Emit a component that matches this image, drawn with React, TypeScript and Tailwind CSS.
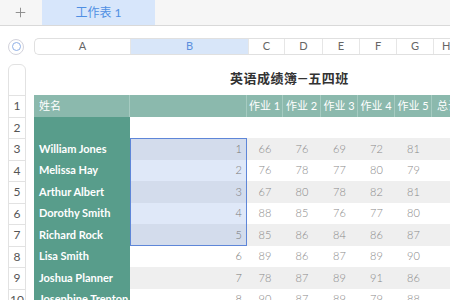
import { Plus } from 'lucide-react';

// 成绩数据
interface Row {
  name: string;
  idx: number;
  scores: number[];
}

const rows: Row[] = [
  { name: 'William Jones', idx: 1, scores: [66, 76, 69, 72, 81] },
  { name: 'Melissa Hay', idx: 2, scores: [76, 78, 77, 80, 79] },
  { name: 'Arthur Albert', idx: 3, scores: [67, 80, 78, 82, 81] },
  { name: 'Dorothy Smith', idx: 4, scores: [88, 85, 76, 77, 80] },
  { name: 'Richard Rock', idx: 5, scores: [85, 86, 84, 86, 87] },
  { name: 'Lisa Smith', idx: 6, scores: [89, 86, 87, 89, 90] },
  { name: 'Joshua Planner', idx: 7, scores: [78, 87, 89, 91, 86] },
  { name: 'Josephine Trenton', idx: 8, scores: [90, 87, 89, 79, 88] },
];

const colLetters = ['C', 'D', 'E', 'F', 'G'];
const colWidths = ['w-[36px]', 'w-[38px]', 'w-[37px]', 'w-[37px]', 'w-[37px]'];
const font = { fontFamily: 'Lato, "Noto Sans CJK SC", sans-serif' };

export default function App() {
  return (
    <div className="w-[450px] h-[300px] overflow-hidden bg-white" style={font}>
      {/* 顶部标签栏 */}
      <div className="flex h-[26px] bg-[#f6f6f6] border-b border-[#d9d9d9]">
        <div className="w-[42px] flex items-center justify-center text-[#8a8a8a]">
          <Plus size={15} strokeWidth={1.5} className="-ml-[2px]" />
        </div>
        <div className="w-[113px] flex items-center justify-center bg-[#d7e6fb] text-[#4f8fe3] text-[12px]">
          工作表 1
        </div>
      </div>

      <div className="flex mt-[12px]">
        {/* 左侧行号 */}
        <div className="w-[34px] shrink-0 flex flex-col pl-[8px]">
          <div className="h-[17px] flex items-center">
            <div className="w-[16px] h-[16px] rounded-full border border-[#d3d3dc] flex items-center justify-center">
              <div className="w-[9px] h-[9px] rounded-full border-[1.5px] border-[#8fb0e6]" />
            </div>
          </div>
          <div className="mt-[9px] w-[18px] border border-[#e2e2e2] rounded-t-[6px] flex flex-col">
            <div className="h-[30px]" />
            {Array.from({ length: 10 }, (_, i) => (
              <div
                key={i}
                className="h-[21.5px] border-t border-[#e2e2e2] flex items-center justify-center text-[12px] text-[#555]"
              >
                {i + 1}
              </div>
            ))}
          </div>
        </div>

        {/* 表格区域 */}
        <div className="flex-1 flex flex-col">
          <div className="flex h-[17px] border border-r-0 border-[#e0e0e0] rounded-l-[5px] text-[11px] text-[#666] overflow-hidden">
            <div className="w-[96px] flex items-center justify-center border-r border-[#e6e6e6]">A</div>
            <div className="w-[117px] flex items-center justify-center bg-[#d8e6f9] text-[#5b8fde]">B</div>
            {colLetters.map((c, i) => (
              <div key={c} className={`${colWidths[i]} flex items-center justify-center border-l border-[#e6e6e6]`}>
                {c}
              </div>
            ))}
            <div className="flex-1 flex items-center pl-[8px] border-l border-[#e6e6e6]">H</div>
          </div>

          <div className="h-[40px] flex items-end pb-[7px] pl-[196px]">
            <span className="text-[13px] font-bold text-[#333] tracking-[0.5px]">英语成绩簿—五四班</span>
          </div>

          {/* 表头 */}
          <div className="flex h-[21.5px] bg-[#8bb9ad] text-white text-[11px]">
            <div className="w-[96px] flex items-center pl-[5px] border-r border-[#a6cbc1]">姓名</div>
            <div className="w-[117px] border-r border-[#a6cbc1]" />
            {colWidths.map((w, i) => (
              <div key={i} className={`${w} flex items-center justify-center border-r border-[#a6cbc1]`}>
                作业 {i + 1}
              </div>
            ))}
            <div className="flex-1 flex items-center pl-[5px] whitespace-nowrap">总计</div>
          </div>

          {/* 空行 */}
          <div className="flex h-[21.5px]">
            <div className="w-[96px] bg-[#589d8b]" />
            <div className="flex-1" />
          </div>

          <div className="relative">
            {rows.map((r, i) => {
              const odd = i % 2 === 0;
              const sel = i < 5;
              return (
                <div key={r.name} className={`flex h-[21.5px] ${odd ? 'bg-[#efefef]' : 'bg-white'}`}>
                  <div className="w-[96px] bg-[#589d8b] flex items-center pl-[5px] text-white text-[11px] font-bold whitespace-nowrap">
                    {r.name}
                  </div>
                  <div
                    className={`w-[117px] flex items-center justify-end pr-[5px] text-[11px] text-[#777] font-light ${
                      sel ? (odd ? 'bg-[#d3dcec]' : 'bg-[#dfe8f8]') : ''
                    }`}
                  >
                    {r.idx}
                  </div>
                  {r.scores.map((s, j) => (
                    <div key={j} className={`${colWidths[j]} flex items-center justify-center text-[11px] text-[#888] font-light`}>
                      {s}
                    </div>
                  ))}
                  <div className="flex-1" />
                </div>
              );
            })}
            {/* 选区边框 */}
            <div className="absolute left-[96px] top-0 w-[117px] h-[107.5px] border-[1.5px] border-[#5e86d8] pointer-events-none" />
          </div>
        </div>
      </div>
    </div>
  );
}
